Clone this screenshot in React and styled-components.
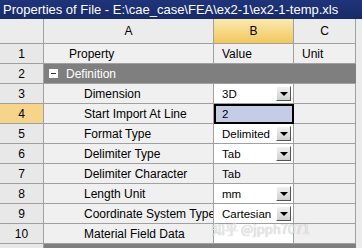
import React from 'react'
import styled, { createGlobalStyle } from 'styled-components'

const GlobalStyle = createGlobalStyle`
  html, body {
    margin: 0;
    padding: 0;
    background: #f0f0f0;
    overflow: hidden;
  }
`

const Window = styled.div`
  position: relative;
  width: 362px;
  height: 248px;
  overflow: hidden;
  background: #ececec;
  font-family: "Liberation Sans", Arial, "Noto Sans CJK SC", sans-serif;
  font-size: 12px;
  color: #000;
`

const TitleBar = styled.div`
  height: 19px;
  background: linear-gradient(#20347a, #172a68);
  color: #fff;
  font-size: 13px;
  line-height: 19px;
  padding-left: 3px;
  white-space: nowrap;
`

const Grid = styled.div`
  display: grid;
  grid-template-columns: 44px 170px 80px 62px 6px;
  grid-template-rows: 25px repeat(11, 20px);
`

const HeadCell = styled.div`
  display: flex;
  align-items: center;
  justify-content: center;
  background: ${p => (p.$active ? 'linear-gradient(#fbe9b0, #f1c75d)' : '#ececec')};
  border-right: 1px solid #a0a0a0;
  border-bottom: 1px solid #a0a0a0;
  box-sizing: border-box;
`

const RowNum = styled.div`
  display: flex;
  align-items: center;
  justify-content: center;
  background: ${p => (p.$active ? '#f6d58a' : '#e8e8e8')};
  border-right: 1px solid #a0a0a0;
  border-bottom: 1px solid #a0a0a0;
  box-sizing: border-box;
`

const Cell = styled.div`
  display: flex;
  align-items: center;
  padding-left: ${p => p.$indent || 4}px;
  background: ${p => (p.$white ? '#fff' : '#f0f0f0')};
  border-right: 1px solid #a0a0a0;
  border-bottom: 1px solid #a0a0a0;
  box-sizing: border-box;
  white-space: nowrap;
  overflow: hidden;
`

const ValueCell = styled(Cell)`
  justify-content: space-between;
  padding-right: 2px;
  font-size: 11.5px;
  background: ${p => (p.$selected ? '#c5cde6' : p.$white ? '#fff' : '#f0f0f0')};
  border: ${p => (p.$selected ? '2px solid #000' : undefined)};
  padding-left: ${p => (p.$selected ? 6 : 8)}px;
`

const GroupRow = styled.div`
  grid-column: 2 / 5;
  display: flex;
  align-items: center;
  gap: 8px;
  padding-left: 5px;
  background: #7f7f7f;
  color: #fff;
  border-bottom: 1px solid #a0a0a0;
  box-sizing: border-box;
`

const Toggle = styled.span`
  width: 9px;
  height: 9px;
  background: #fff;
  position: relative;
  &::after {
    content: '';
    position: absolute;
    left: 2px;
    right: 2px;
    top: 4px;
    height: 1px;
    background: #333;
  }
`

const DropButton = styled.span`
  width: 15px;
  height: 15px;
  flex-shrink: 0;
  box-sizing: border-box;
  background: linear-gradient(#f2f2f2, #cfcfcf);
  border: 1px solid;
  border-color: #fff #555 #555 #fff;
  display: flex;
  align-items: center;
  justify-content: center;
`

const Arrow = styled.span`
  width: 0;
  height: 0;
  border-left: 4px solid transparent;
  border-right: 4px solid transparent;
  border-top: 4px solid #000;
`

const Filler = styled.div`
  background: #ececec;
`

const Watermark = styled.div`
  position: absolute;
  left: 212px;
  top: 219px;
  color: rgba(255, 255, 255, 0.75);
  text-shadow: 0 0 1px rgba(90, 90, 90, 0.6);
  font-family: "Noto Sans CJK SC", "DejaVu Sans", sans-serif;
  font-size: 13px;
  white-space: nowrap;
  pointer-events: none;
`

const rows = [
  { n: 3, name: 'Dimension', value: '3D', drop: true, white: true },
  { n: 4, name: 'Start Import At Line', value: '2', selected: true },
  { n: 5, name: 'Format Type', value: 'Delimited', drop: true, white: true },
  { n: 6, name: 'Delimiter Type', value: 'Tab', drop: true, white: true },
  { n: 7, name: 'Delimiter Character', value: 'Tab' },
  { n: 8, name: 'Length Unit', value: 'mm', drop: true, white: true },
  { n: 9, name: 'Coordinate System Type', value: 'Cartesian', drop: true, white: true },
  { n: 10, name: 'Material Field Data', value: '', white: true },
]

export default function App() {
  return (
    <Window>
      <GlobalStyle />
      <TitleBar>Properties of File - E:\cae_case\FEA\ex2-1\ex2-1-temp.xls</TitleBar>
      <Grid>
        <HeadCell />
        <HeadCell>A</HeadCell>
        <HeadCell $active>B</HeadCell>
        <HeadCell>C</HeadCell>
        <Filler />

        <RowNum>1</RowNum>
        <Cell $indent={25}>Property</Cell>
        <Cell $indent={8}>Value</Cell>
        <Cell $indent={8}>Unit</Cell>
        <Filler />

        <RowNum>2</RowNum>
        <GroupRow>
          <Toggle />
          Definition
        </GroupRow>
        <Filler />

        {rows.map(r => (
          <React.Fragment key={r.n}>
            <RowNum $active={r.selected}>{r.n}</RowNum>
            <Cell $indent={40}>{r.name}</Cell>
            <ValueCell $white={r.white} $selected={r.selected}>
              {r.value}
              {r.drop && (
                <DropButton>
                  <Arrow />
                </DropButton>
              )}
            </ValueCell>
            <Cell />
            <Filler />
          </React.Fragment>
        ))}

        <RowNum />
        <GroupRow />
        <Filler />
      </Grid>
      <Watermark>知乎 @jpph7071</Watermark>
    </Window>
  )
}
